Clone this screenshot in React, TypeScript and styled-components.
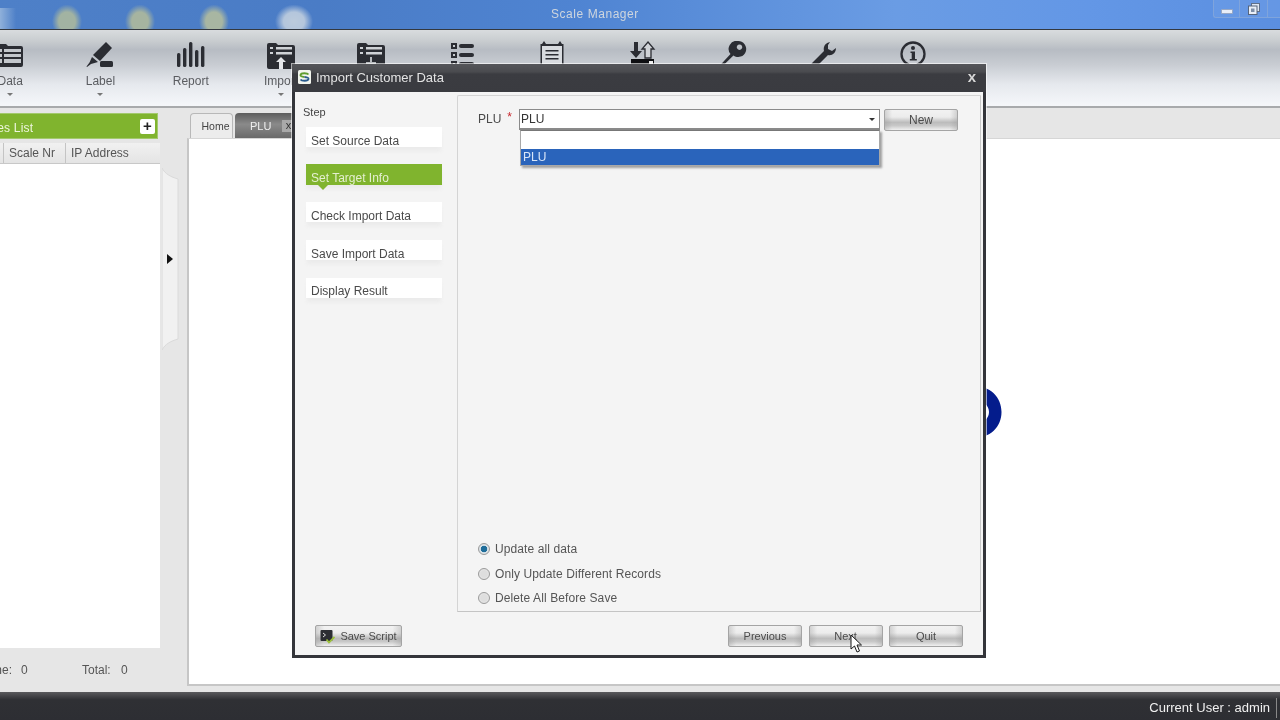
import React from 'react';
import styled, { createGlobalStyle } from 'styled-components';

const Global = createGlobalStyle`
  html, body { margin: 0; padding: 0; background: #fff; overflow: hidden; }
  * { box-sizing: border-box; }
`;

const Page = styled.div`
  position: relative;
  width: 1280px;
  height: 720px;
  overflow: hidden;
  display: flex;
  flex-direction: column;
  font-family: "Liberation Sans", Arial, sans-serif;
  font-size: 12px;
  color: #4a4a4a;
  filter: blur(0.3px);
`;

const TitleBar = styled.header`
  height: 30px;
  flex: none;
  display: flex;
  align-items: flex-start;
  border-bottom: 1px solid #33383f;
  background:
    radial-gradient(ellipse 15px 17px at 50% 70%, #a2b3a2 0%, #a2b3a2 55%, rgba(160,178,160,0) 100%) 52px 4px / 30px 25px no-repeat,
    radial-gradient(ellipse 15px 17px at 50% 70%, #a6b4a0 0%, #a6b4a0 55%, rgba(160,178,160,0) 100%) 125px 4px / 30px 25px no-repeat,
    radial-gradient(ellipse 15px 17px at 50% 70%, #a8b6a2 0%, #a8b6a2 55%, rgba(160,178,160,0) 100%) 199px 4px / 30px 25px no-repeat,
    radial-gradient(ellipse 19px 17px at 50% 70%, #bccbdc 0%, #b4c6dc 55%, rgba(190,205,222,0) 100%) 275px 4px / 38px 25px no-repeat,
    linear-gradient(90deg, #8fb0da, rgba(143,176,218,0)) 0 8px / 16px 21px no-repeat,
    linear-gradient(90deg, #4e80c8 0%, #4a7cc6 25%, #4f84d2 45%, #6a9ce4 70%, #6397e6 85%, #5b8fe0 100%);
`;

const AppTitle = styled.span`
  margin: 7px 0 0 551px;
  font-size: 12px;
  letter-spacing: 0.55px;
  color: #cfd6de;
`;

const WindowControls = styled.div`
  margin-left: auto;
  height: 18px;
  width: 67px;
  display: flex;
  border: 1px solid #7fa4dc;
  border-top: 0;
  border-right: 0;
  border-bottom-left-radius: 3px;
  background: rgba(120, 165, 235, 0.35);
`;

const ControlCell = styled.div<{ $w: number }>`
  width: ${p => p.$w}px;
  flex: none;
  display: flex;
  align-items: center;
  justify-content: center;
  border-right: 1px solid #7fa4dc;
  &:last-child { border-right: 0; }
`;

const MinimizeGlyph = styled.div`
  width: 12px;
  height: 5px;
  margin-top: 5px;
  background: #e8eef8;
  border: 1px solid #98a8c4;
  border-radius: 1px;
`;

const Toolbar = styled.nav`
  height: 78px;
  flex: none;
  display: flex;
  margin-left: -35px;
  border-bottom: 2px solid #a8aaac;
  width: 1315px;
  background: linear-gradient(180deg, #d9dcde 0%, #c9cdd0 14%, #b7bcc3 26%, #c8ccd2 45%, #e6e9ee 72%, #f5f7fa 100%);
`;

const ToolItem = styled.div`
  width: 90.3px;
  flex: none;
  display: flex;
  flex-direction: column;
  align-items: center;
  padding-top: 11px;
`;

const ToolIcon = styled.svg`
  width: 28px;
  height: 28px;
  display: block;
  fill: #2b2d33;
`;

const ToolLabel = styled.span`
  margin-top: 5px;
  height: 14px;
  line-height: 14px;
  font-size: 12px;
  color: #5a5c60;
`;

const ToolCaret = styled.i`
  margin-top: 5px;
  width: 0;
  height: 0;
  border-left: 3px solid transparent;
  border-right: 3px solid transparent;
  border-top: 3px solid #777;
`;

const Main = styled.main`
  flex: 1;
  min-height: 0;
  display: flex;
  background: #e6e6e6;
`;

const LeftPanel = styled.section`
  width: 160px;
  flex: none;
  display: flex;
  flex-direction: column;
  padding-top: 5px;
  overflow: hidden;
`;

const ListHeader = styled.div`
  height: 26px;
  width: 158px;
  flex: none;
  display: flex;
  align-items: center;
  justify-content: space-between;
  padding-right: 2px;
  background: #80b42e;
  border: 1px solid #a3c96c;
  border-left: 0;
  color: #eef6df;
`;

const ListTitle = styled.span`
  margin: 3px 0 0 -27px;
  font-size: 12px;
  letter-spacing: 0.2px;
  white-space: nowrap;
`;

const PlusButton = styled.div`
  width: 15px;
  height: 15px;
  background: #fff;
  border-radius: 2px;
  color: #222;
  font-weight: 700;
  font-size: 15px;
  line-height: 14px;
  text-align: center;
`;

const TableHead = styled.div`
  margin-top: 4px;
  height: 21px;
  flex: none;
  display: flex;
  align-items: center;
  background: linear-gradient(180deg, #f1f1f1, #e4e4e4);
  border-bottom: 1px solid #c8c8c8;
  color: #555;
`;

const HeadCell = styled.div<{ $w: number }>`
  width: ${p => p.$w}px;
  flex: none;
  height: 100%;
  line-height: 21px;
  padding-left: ${p => (p.$w > 10 ? 5 : 0)}px;
  border-right: 1px solid #c4c4c4;
  &:last-child { border-right: 0; }
`;

const TableBody = styled.div`
  flex: 1;
  background: #fff;
`;

const ListFooter = styled.div`
  height: 44px;
  flex: none;
  display: flex;
  align-items: center;
  color: #555;
`;

const FooterLabel = styled.span<{ $x: number; $w: number }>`
  margin-left: ${p => p.$x}px;
  width: ${p => p.$w}px;
  flex: none;
  white-space: nowrap;
`;

const Splitter = styled.div`
  width: 27px;
  flex: none;
  padding: 60px 0 0 2px;
`;

const SplitterShape = styled.svg`
  display: block;
  width: 17px;
  height: 182px;
`;

const RightPanel = styled.section`
  flex: 1;
  min-width: 0;
  display: flex;
  flex-direction: column;
  padding: 5px 0 6px;
`;

const TabStrip = styled.div`
  height: 25px;
  flex: none;
  display: flex;
  gap: 2px;
  padding-left: 3px;
`;

const HomeTab = styled.div`
  width: 43px;
  display: flex;
  align-items: center;
  padding-left: 10.500px;
  background: #ececec;
  border: 1px solid #b8b8b8;
  border-bottom: 0;
  border-radius: 4px 4px 0 0;
  font-size: 10.500px;
  color: #444;
`;

const PluTab = styled.div`
  width: 70px;
  display: flex;
  align-items: center;
  padding-left: 15px;
  gap: 11px;
  background: linear-gradient(180deg, #5d5d5d, #8a8a8a 45%, #6a6a6a);
  border-radius: 4px 4px 0 0;
  font-size: 11px;
  color: #eee;
`;

const TabClose = styled.span`
  width: 12px;
  height: 12px;
  background: #a9a9a9;
  color: #333;
  font-size: 11px;
  line-height: 11px;
  text-align: center;
`;

const Pane = styled.div`
  flex: 1;
  display: flex;
  align-items: center;
  justify-content: center;
  background: #fff;
  border-left: 2px solid #c6c6c6;
  border-bottom: 2px solid #c6c6c6;
  border-top: 1px solid #d6d6d6;
`;

const HomeLogo = styled.svg`
  width: 536px;
  height: 60px;
  display: block;
`;

const StatusBar = styled.footer`
  height: 28px;
  flex: none;
  display: flex;
  align-items: center;
  justify-content: flex-end;
  padding: 4px 3px 0 0;
  background: linear-gradient(180deg, #5a5a5d 0%, #2f3034 28%, #2d2e33 100%);
  color: #f0f0f0;
  font-size: 13px;
`;

const StatusUser = styled.span`
  padding-right: 6px;
  border-right: 1px solid #888;
  line-height: 20px;
`;

/* dialog */
const Dialog = styled.div`
  position: absolute;
  left: 292px;
  top: 64px;
  width: 694px;
  height: 594px;
  display: flex;
  flex-direction: column;
  background: #f4f4f4;
  border: 3px solid #34353a;
  border-top: 0;
  box-shadow: 0 0 0 1px rgba(255,255,255,0.6);
`;

const DialogTitle = styled.div`
  height: 28px;
  flex: none;
  margin: 0 -3px;
  display: flex;
  align-items: center;
  padding: 0 10px 2px 6px;
  gap: 5px;
  background: linear-gradient(180deg, #55565a 0%, #4a4b4f 28%, #3b3c41 36%, #3a3b40 100%);
  color: #e4e4e4;
  font-size: 13px;
`;

const DialogLogo = styled.svg`
  width: 13px;
  height: 14px;
  flex: none;
`;

const DialogClose = styled.span`
  margin-left: auto;
  font-size: 15px;
  font-weight: 700;
  line-height: 14px;
  color: #d8d8d8;
`;

const DialogBody = styled.div`
  height: 520px;
  flex: none;
  display: flex;
  padding: 3px 3px 0 8px;
`;

const StepColumn = styled.div`
  width: 154px;
  flex: none;
  display: flex;
  flex-direction: column;
`;

const StepHeading = styled.div`
  margin-top: 10px;
  height: 14px;
  font-size: 11px;
  line-height: 14px;
  color: #444;
`;

const StepList = styled.div`
  margin: 8px 0 0 3px;
  display: flex;
  flex-direction: column;
  gap: 17.7px;
`;

const StepItem = styled.div<{ $active?: boolean }>`
  position: relative;
  width: 136px;
  height: ${p => (p.$active ? 21 : 20)}px;
  margin-top: ${p => (p.$active ? -1 : 0)}px;
  padding: ${p => (p.$active ? 7.5 : 6.5)}px 0 0 5px;
  font-size: 12px;
  line-height: 15px;
  white-space: nowrap;
  background: ${p => (p.$active ? '#80b42e' : '#fff')};
  color: ${p => (p.$active ? '#e4efd0' : '#4a4a4a')};
  box-shadow: 0 5px 4px -1px #ebebeb;
  ${p => p.$active && `
    &::after {
      content: '';
      position: absolute;
      left: 12px;
      bottom: -5px;
      border-left: 5px solid transparent;
      border-right: 5px solid transparent;
      border-top: 5px solid #80b42e;
    }
  `}
`;

const ContentPanel = styled.div`
  flex: 1;
  position: relative;
  display: flex;
  flex-direction: column;
  justify-content: space-between;
  padding: 13px 22px 4.700px 20px;
  background: #f4f4f4;
  border: 1px solid #d4d4d4;
  border-right-color: #c8c8c8;
  border-bottom-color: #c4c4c4;
  border-radius: 2px 0 0 0;
`;

const FieldRow = styled.div`
  display: flex;
  align-items: center;
  height: 21px;
`;

const FieldLabel = styled.label`
  width: 41px;
  flex: none;
  margin-top: -1px;
  font-size: 12px;
  color: #4a4a4a;
`;

const Required = styled.span`
  position: relative;
  top: -2px;
  margin-left: 6px;
  color: #c8282e;
`;

const SelectBox = styled.div`
  width: 361px;
  height: 21px;
  flex: none;
  display: flex;
  align-items: center;
  justify-content: space-between;
  padding: 0 4px 0 1px;
  background: #fff;
  border: 1px solid #8a8a8a;
  border-bottom-width: 2px;
  color: #333;
`;

const SelectCaret = styled.i`
  width: 0;
  height: 0;
  border-left: 3px solid transparent;
  border-right: 3px solid transparent;
  border-top: 3px solid #333;
`;

const Dropdown = styled.div`
  position: absolute;
  left: 62px;
  top: 34px;
  width: 360px;
  height: 36px;
  padding-top: 18px;
  background: #fff;
  border: 1px solid #a8a8a8;
  border-top-color: #777;
  box-shadow: 2px 2px 2px rgba(90, 90, 90, 0.55);
`;

const DropdownOption = styled.div`
  height: 16px;
  line-height: 16px;
  padding-left: 2px;
  background: #2a64bb;
  color: #d9e6f8;
`;

const PushButton = styled.button<{ $w: number }>`
  width: ${p => p.$w}px;
  height: 22px;
  flex: none;
  padding: 0;
  display: flex;
  align-items: center;
  justify-content: center;
  gap: 5px;
  font-family: inherit;
  font-size: 11px;
  color: #4c4c4c;
  border: 1px solid #a4a4a4;
  border-radius: 2px;
  background:
    linear-gradient(90deg, rgba(150,150,150,0.35) 0, rgba(150,150,150,0) 10%, rgba(150,150,150,0) 90%, rgba(150,150,150,0.35) 100%),
    linear-gradient(180deg, #f2f2f2 0%, #ececec 35%, #bcbcbc 62%, #c8c8c8 78%, #f0f0f0 100%);
`;

const NewButton = styled(PushButton)`
  margin-left: 4px;
  font-size: 12px;
`;

const RadioGroup = styled.div`
  display: flex;
  flex-direction: column;
  gap: 8.750px;
`;

const RadioRow = styled.div`
  height: 16px;
  display: flex;
  align-items: center;
  gap: 5px;
  font-size: 12px;
  letter-spacing: 0.1px;
  color: #555;
`;

const RadioDot = styled.span<{ $checked?: boolean }>`
  width: 12px;
  height: 12px;
  flex: none;
  border-radius: 50%;
  border: 1px solid #9a9a9a;
  background: ${p =>
    p.$checked
      ? 'radial-gradient(circle, #1f6d9a 0 3px, #dfe6ea 3.6px, #cfd5d8 100%)'
      : 'radial-gradient(circle, #dedede 0 3px, #ececec 100%)'};
`;

const DialogFooter = styled.div`
  flex: 1;
  display: flex;
  align-items: center;
  gap: 6.500px;
  padding: 5px 20px 0 20px;
`;

const FooterSpacer = styled.div`
  flex: 1;
`;

const ScriptIcon = styled.svg`
  width: 15px;
  height: 15px;
  flex: none;
`;

const Cursor = styled.svg`
  position: absolute;
  left: 850px;
  top: 634px;
  width: 13px;
  height: 19px;
`;

const Ico: Record<string, React.ReactNode> = {
  data: (
    <>
      <path d="M1 5a2 2 0 0 1 2-2h7l2 2h13a2 2 0 0 1 2 2v17a2 2 0 0 1-2 2H3a2 2 0 0 1-2-2z" />
      <path fill="#c3c7cc" d="M8 8h17v3H8zM8 13h17v3H8zM8 18h17v4H8zM3 8h3v3H3zM3 13h3v3H3zM3 18h3v4H3z" />
    </>
  ),
  label: (
    <>
      <path d="M20 1l6 6-12 13-7-6z" />
      <path d="M6 16l6 5-7 2-4 3-.5-.5 3-4z" />
      <rect x="14" y="20" width="13" height="6" rx="1.5" />
    </>
  ),
  report: (
    <>
      <rect x="0" y="12" width="3.4" height="14" rx="1.5" />
      <rect x="6" y="7" width="3.4" height="19" rx="1.5" />
      <rect x="12" y="1" width="3.4" height="25" rx="1.5" />
      <rect x="18" y="9" width="3.4" height="17" rx="1.5" />
      <rect x="24" y="5" width="3.4" height="21" rx="1.5" />
    </>
  ),
  imp: (
    <>
      <path d="M0 4a2 2 0 0 1 2-2h7l2 2h15a2 2 0 0 1 2 2v20a2 2 0 0 1-2 2H2a2 2 0 0 1-2-2z" />
      <path fill="#cfd2d6" d="M3 6h3v2H3zM9 6h16v2.500H9zM3 11h3v2H3zM9 11h16v2.500H9z" />
      <path fill="#e4e6e9" d="M14 16l5 5h-3v7h-4v-7H9z" />
    </>
  ),
  exp: (
    <>
      <path d="M0 4a2 2 0 0 1 2-2h7l2 2h15a2 2 0 0 1 2 2v20a2 2 0 0 1-2 2H2a2 2 0 0 1-2-2z" />
      <path fill="#cfd2d6" d="M3 6h3v2H3zM9 6h16v2.500H9zM3 11h3v2H3zM9 11h16v2.500H9z" />
      <path fill="#b8bbbf" d="M13 16h2v5h4v2H9v-2h4z" />
    </>
  ),
  list: (
    <>
      <path d="M3 2h6v6H3zM3 11h6v6H3zM3 20h6v6H3z" />
      <path fill="#c8ccd0" d="M5 4h2v2H5zM5 13h2v2H5zM5 22h2v2H5z" />
      <rect x="11" y="3" width="15" height="4" rx="2" />
      <rect x="11" y="12" width="15" height="4" rx="2" />
      <rect x="11" y="21" width="15" height="4" rx="2" />
    </>
  ),
  calendar: (
    <>
      <path d="M6 0l2 3h12l2-3 2 3h1.500v25h-23V3H4z" />
      <path fill="#d8dbdf" d="M4 5h20v21H4z" />
      <path d="M7.500 9h13v1.600h-13zM7.500 13h13v1.600h-13zM7.500 17h13v1.600h-13z" />
    </>
  ),
  transfer: (
    <>
      <path d="M6 1h4v9h4l-6 7-6-7h4z" />
      <path fill="#d0d3d7" stroke="#2b2d33" strokeWidth="1.3" d="M20 1l6 7h-3v9h-6V8h-3z" />
      <path fill="#0e0f12" d="M3 18h23v7H3z" />
      <path fill="#eee" d="M21 20h4v3h-4z" />
    </>
  ),
  key: (
    <path
      fillRule="evenodd"
      d="M19 0a8 8 0 1 1-4.600 14.400L6 22.800l1.800 1.800-2.400 2.400-1.800-1.800-1.500 1.500-1.700-1.700L11.500 13A8 8 0 0 1 19 0zm1.500 3.500a2.700 2.700 0 1 0 .01 0z"
    />
  ),
  wrench: (
    <path d="M21 1c-5 1-7 5-6 9L3 22c-3 3 1 7 4 4l12-12c4 1 8-2 8-7l-4 3-4-2V4z" />
  ),
  info: (
    <>
      <circle cx="14" cy="13" r="11.500" fill="none" stroke="#2b2d33" strokeWidth="2.300" />
      <circle cx="14" cy="7" r="2" />
      <path d="M11.500 10.500H16V18h1.800v1.500h-7V18h1.900v-6h-1.200z" />
    </>
  ),
};

const tools: { key: string; label?: string; caret?: boolean }[] = [
  { key: 'data', label: 'Data', caret: true },
  { key: 'label', label: 'Label', caret: true },
  { key: 'report', label: 'Report' },
  { key: 'imp', label: 'Import', caret: true },
  { key: 'exp' },
  { key: 'list' },
  { key: 'calendar' },
  { key: 'transfer' },
  { key: 'key' },
  { key: 'wrench' },
  { key: 'info' },
];

const steps = ['Set Source Data', 'Set Target Info', 'Check Import Data', 'Save Import Data', 'Display Result'];
const radios = ['Update all data', 'Only Update Different Records', 'Delete All Before Save'];

export default function App() {
  return (
    <Page>
      <Global />
      <TitleBar>
        <AppTitle>Scale Manager</AppTitle>
        <WindowControls>
          <ControlCell $w={26}>
            <MinimizeGlyph />
          </ControlCell>
          <ControlCell $w={28}>
            <svg width="12" height="12" viewBox="0 0 12 12">
              <rect x="3.500" y="0.500" width="8" height="8" fill="#dfe7f3" stroke="#5f6f88" />
              <rect x="0.500" y="3" width="8.500" height="8.500" fill="#e9eef6" stroke="#56657d" />
              <rect x="3" y="5.500" width="3.500" height="3.500" fill="#7d8ea8" />
            </svg>
          </ControlCell>
          <ControlCell $w={13} />
        </WindowControls>
      </TitleBar>

      <Toolbar>
        {tools.map(t => (
          <ToolItem key={t.key}>
            <ToolIcon viewBox="0 0 28 28">{Ico[t.key]}</ToolIcon>
            {t.label && <ToolLabel>{t.label}</ToolLabel>}
            {t.caret && <ToolCaret />}
          </ToolItem>
        ))}
      </Toolbar>

      <Main>
        <LeftPanel>
          <ListHeader>
            <ListTitle>Scales List</ListTitle>
            <PlusButton>+</PlusButton>
          </ListHeader>
          <TableHead>
            <HeadCell $w={4} />
            <HeadCell $w={62}>Scale Nr</HeadCell>
            <HeadCell $w={94}>IP Address</HeadCell>
          </TableHead>
          <TableBody />
          <ListFooter>
            <FooterLabel $x={-26} $w={47}>Online:</FooterLabel>
            <FooterLabel $x={0} $w={61}>0</FooterLabel>
            <FooterLabel $x={0} $w={39}>Total:</FooterLabel>
            <FooterLabel $x={0} $w={10}>0</FooterLabel>
          </ListFooter>
        </LeftPanel>
        <Splitter>
          <SplitterShape viewBox="0 0 17 182">
            <path
              d="M0 0c3 6 9 9 16 11v160c-7 2-13 5-16 11z"
              fill="#f1f1f1"
              stroke="#dadada"
              strokeWidth="1"
            />
            <path d="M5 86l6 5-6 5z" fill="#111" />
          </SplitterShape>
        </Splitter>
        <RightPanel>
          <TabStrip>
            <HomeTab>Home</HomeTab>
            <PluTab>
              PLU
              <TabClose>x</TabClose>
            </PluTab>
          </TabStrip>
          <Pane>
            <HomeLogo viewBox="0 0 536 60">
              <path
                fillRule="evenodd"
                d="M504 3.500c-5 0-8 1-8 1v51s3 1 8 1c20 0 30.500-12 30.500-26.500S524 3.500 504 3.500zm7 15.500c6 0 11 5 11 11s-5 11-11 11z"
                fill="#041c8c"
              />
            </HomeLogo>
          </Pane>
        </RightPanel>
      </Main>

      <StatusBar>
        <StatusUser>Current User : admin</StatusUser>
      </StatusBar>

      <Dialog>
        <DialogTitle>
          <DialogLogo viewBox="0 0 13 14">
            <rect width="13" height="14" rx="1.500" fill="#f2f5ee" />
            <path d="M10.500 4.500C9.500 3 3 2.500 2.500 5c-.3 1.800 4 2 4 2" fill="none" stroke="#5f9c2f" strokeWidth="1.800" />
            <path d="M2.500 9.500C3.500 11 10 11.500 10.500 9c.3-1.800-4-2-4-2" fill="none" stroke="#2a5c8e" strokeWidth="1.800" />
          </DialogLogo>
          Import Customer Data
          <DialogClose>x</DialogClose>
        </DialogTitle>
        <DialogBody>
          <StepColumn>
            <StepHeading>Step</StepHeading>
            <StepList>
              {steps.map((s, i) => (
                <StepItem key={s} $active={i === 1}>{s}</StepItem>
              ))}
            </StepList>
          </StepColumn>
          <ContentPanel>
            <FieldRow>
              <FieldLabel>
                PLU<Required>*</Required>
              </FieldLabel>
              <SelectBox>
                PLU
                <SelectCaret />
              </SelectBox>
              <NewButton $w={74}>New</NewButton>
            </FieldRow>
            <Dropdown>
              <DropdownOption>PLU</DropdownOption>
            </Dropdown>
            <RadioGroup>
              {radios.map((r, i) => (
                <RadioRow key={r}>
                  <RadioDot $checked={i === 0} />
                  {r}
                </RadioRow>
              ))}
            </RadioGroup>
          </ContentPanel>
        </DialogBody>
        <DialogFooter>
          <PushButton $w={87}>
            <ScriptIcon viewBox="0 0 15 15">
              <rect x="0.500" y="1" width="12" height="11" rx="1" fill="#2c2e33" />
              <path d="M3 4l2.500 2L3 8" fill="none" stroke="#ddd" strokeWidth="1" />
              <path d="M6.500 10.500l2.500 3L14.500 8" fill="none" stroke="#9cc13c" strokeWidth="1.800" />
            </ScriptIcon>
            Save Script
          </PushButton>
          <FooterSpacer />
          <PushButton $w={74}>Previous</PushButton>
          <PushButton $w={74}>Next</PushButton>
          <PushButton $w={74}>Quit</PushButton>
        </DialogFooter>
      </Dialog>

      <Cursor viewBox="0 0 13 19">
        <path d="M1 1v14l3.500-3 2.500 6 2.500-1-2.500-6h4.500z" fill="#fff" stroke="#1a1a1a" strokeWidth="1" />
      </Cursor>
    </Page>
  );
}
